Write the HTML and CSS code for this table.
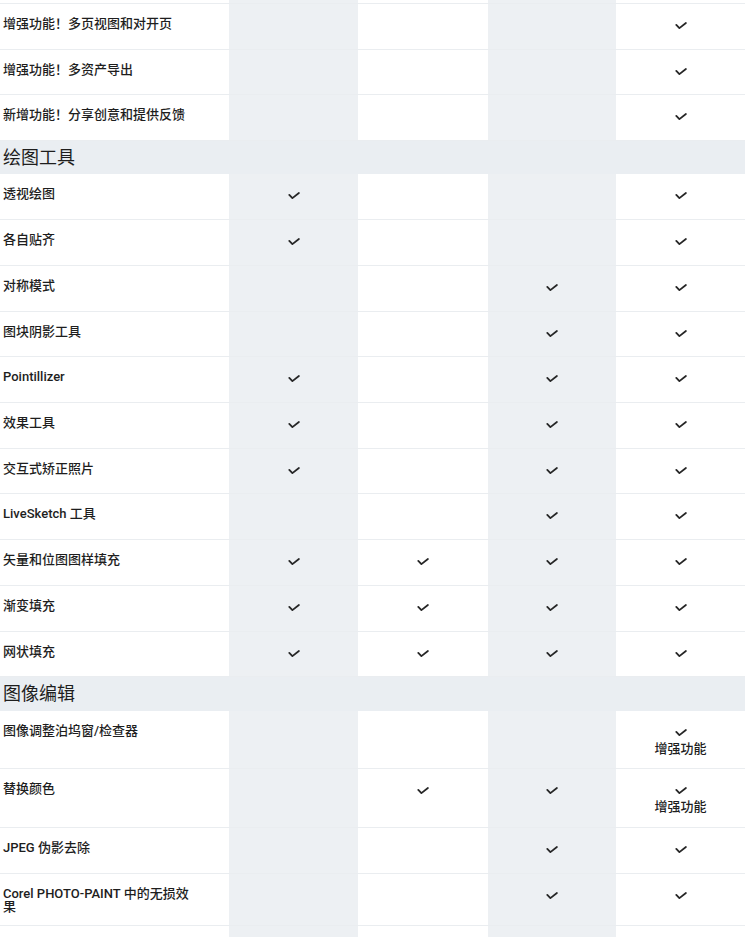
FILE: index.html
```html
<!DOCTYPE html>
<html lang="zh-CN">
<head>
<meta charset="utf-8">
<title>功能比较</title>
<link rel="stylesheet" href="styles.css">
</head>
<body>
<svg class="defs" width="0" height="0" aria-hidden="true">
  <defs>
    <symbol id="chk" viewBox="0 0 12 8">
      <path d="M1.3 2.9 4.4 6.1 10.9 1" fill="none" stroke="#262626" stroke-width="1.8" stroke-linecap="round" stroke-linejoin="round"/>
    </symbol>
  </defs>
</svg>
<div class="table">
  <div class="row stub"><div class="cell"></div><div class="cell alt"></div><div class="cell"></div><div class="cell alt"></div><div class="cell"></div></div>

  <div class="row"><div class="cell feat">增强功能！多页视图和对开页</div><div class="cell alt"></div><div class="cell"></div><div class="cell alt"></div><div class="cell val"><span class="ck"><svg><use href="#chk"/></svg></span></div></div>
  <div class="row"><div class="cell feat">增强功能！多资产导出</div><div class="cell alt"></div><div class="cell"></div><div class="cell alt"></div><div class="cell val"><span class="ck"><svg><use href="#chk"/></svg></span></div></div>
  <div class="row"><div class="cell feat">新增功能！分享创意和提供反馈</div><div class="cell alt"></div><div class="cell"></div><div class="cell alt"></div><div class="cell val"><span class="ck"><svg><use href="#chk"/></svg></span></div></div>

  <div class="section">绘图工具</div>

  <div class="row"><div class="cell feat">透视绘图</div><div class="cell alt val"><span class="ck"><svg><use href="#chk"/></svg></span></div><div class="cell"></div><div class="cell alt"></div><div class="cell val"><span class="ck"><svg><use href="#chk"/></svg></span></div></div>
  <div class="row"><div class="cell feat">各自贴齐</div><div class="cell alt val"><span class="ck"><svg><use href="#chk"/></svg></span></div><div class="cell"></div><div class="cell alt"></div><div class="cell val"><span class="ck"><svg><use href="#chk"/></svg></span></div></div>
  <div class="row"><div class="cell feat">对称模式</div><div class="cell alt"></div><div class="cell"></div><div class="cell alt val"><span class="ck"><svg><use href="#chk"/></svg></span></div><div class="cell val"><span class="ck"><svg><use href="#chk"/></svg></span></div></div>
  <div class="row"><div class="cell feat">图块阴影工具</div><div class="cell alt"></div><div class="cell"></div><div class="cell alt val"><span class="ck"><svg><use href="#chk"/></svg></span></div><div class="cell val"><span class="ck"><svg><use href="#chk"/></svg></span></div></div>
  <div class="row"><div class="cell feat">Pointillizer</div><div class="cell alt val"><span class="ck"><svg><use href="#chk"/></svg></span></div><div class="cell"></div><div class="cell alt val"><span class="ck"><svg><use href="#chk"/></svg></span></div><div class="cell val"><span class="ck"><svg><use href="#chk"/></svg></span></div></div>
  <div class="row"><div class="cell feat">效果工具</div><div class="cell alt val"><span class="ck"><svg><use href="#chk"/></svg></span></div><div class="cell"></div><div class="cell alt val"><span class="ck"><svg><use href="#chk"/></svg></span></div><div class="cell val"><span class="ck"><svg><use href="#chk"/></svg></span></div></div>
  <div class="row"><div class="cell feat">交互式矫正照片</div><div class="cell alt val"><span class="ck"><svg><use href="#chk"/></svg></span></div><div class="cell"></div><div class="cell alt val"><span class="ck"><svg><use href="#chk"/></svg></span></div><div class="cell val"><span class="ck"><svg><use href="#chk"/></svg></span></div></div>
  <div class="row"><div class="cell feat">LiveSketch 工具</div><div class="cell alt"></div><div class="cell"></div><div class="cell alt val"><span class="ck"><svg><use href="#chk"/></svg></span></div><div class="cell val"><span class="ck"><svg><use href="#chk"/></svg></span></div></div>
  <div class="row"><div class="cell feat">矢量和位图图样填充</div><div class="cell alt val"><span class="ck"><svg><use href="#chk"/></svg></span></div><div class="cell val"><span class="ck"><svg><use href="#chk"/></svg></span></div><div class="cell alt val"><span class="ck"><svg><use href="#chk"/></svg></span></div><div class="cell val"><span class="ck"><svg><use href="#chk"/></svg></span></div></div>
  <div class="row"><div class="cell feat">渐变填充</div><div class="cell alt val"><span class="ck"><svg><use href="#chk"/></svg></span></div><div class="cell val"><span class="ck"><svg><use href="#chk"/></svg></span></div><div class="cell alt val"><span class="ck"><svg><use href="#chk"/></svg></span></div><div class="cell val"><span class="ck"><svg><use href="#chk"/></svg></span></div></div>
  <div class="row"><div class="cell feat">网状填充</div><div class="cell alt val"><span class="ck"><svg><use href="#chk"/></svg></span></div><div class="cell val"><span class="ck"><svg><use href="#chk"/></svg></span></div><div class="cell alt val"><span class="ck"><svg><use href="#chk"/></svg></span></div><div class="cell val"><span class="ck"><svg><use href="#chk"/></svg></span></div></div>

  <div class="section">图像编辑</div>

  <div class="row"><div class="cell feat">图像调整泊坞窗/检查器</div><div class="cell alt"></div><div class="cell"></div><div class="cell alt"></div><div class="cell val"><span class="ck"><svg><use href="#chk"/></svg></span><span class="note">增强功能</span></div></div>
  <div class="row"><div class="cell feat">替换颜色</div><div class="cell alt"></div><div class="cell val"><span class="ck"><svg><use href="#chk"/></svg></span></div><div class="cell alt val"><span class="ck"><svg><use href="#chk"/></svg></span></div><div class="cell val"><span class="ck"><svg><use href="#chk"/></svg></span><span class="note">增强功能</span></div></div>
  <div class="row"><div class="cell feat">JPEG 伪影去除</div><div class="cell alt"></div><div class="cell"></div><div class="cell alt val"><span class="ck"><svg><use href="#chk"/></svg></span></div><div class="cell val"><span class="ck"><svg><use href="#chk"/></svg></span></div></div>
  <div class="row"><div class="cell feat">Corel PHOTO-PAINT 中的无损效果</div><div class="cell alt"></div><div class="cell"></div><div class="cell alt val"><span class="ck"><svg><use href="#chk"/></svg></span></div><div class="cell val"><span class="ck"><svg><use href="#chk"/></svg></span></div></div>

  <div class="row tail"><div class="cell"></div><div class="cell alt"></div><div class="cell"></div><div class="cell alt"></div><div class="cell"></div></div>
</div>
</body>
</html>
```

FILE: styles.css
```css
html, body {
  margin: 0;
  padding: 0;
  background: #ffffff;
}

body {
  font-family: Roboto, "Noto Sans CJK SC", sans-serif;
  color: #1e1e1e;
}

.defs {
  position: absolute;
  width: 0;
  height: 0;
  overflow: hidden;
}

.table {
  width: 745px;
}

.row {
  display: grid;
  grid-template-columns: 229px 129px 130px 128px 129px;
  min-height: 44.72px;
  border-bottom: 1px solid #eaedf0;
}

.row.stub {
  min-height: 2.8px;
}

.row.tail {
  min-height: 40px;
  border-bottom: none;
}

.cell {
  padding: 0;
}

.alt {
  background: #edf0f3;
}

.feat {
  padding: 13px 34px 12px 3px;
  font-size: 13px;
  line-height: 13px;
  font-weight: 500;
}

.val {
  display: flex;
  flex-direction: column;
  align-items: center;
  padding: 14px 0 12.5px;
}

.ck {
  display: flex;
  align-items: center;
  justify-content: center;
  height: 16px;
}

.ck svg {
  width: 12px;
  height: 8px;
  display: block;
}

.note {
  font-size: 13px;
  line-height: 15px;
  font-weight: 500;
  color: #1e1e1e;
}

.section {
  height: 33.5px;
  line-height: 33.5px;
  padding-left: 3px;
  font-size: 18px;
  font-weight: 400;
  background: #eaeef2;
  color: #1e1e1e;
}
```
